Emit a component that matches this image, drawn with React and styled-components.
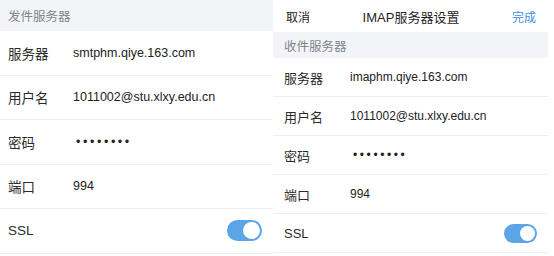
import React from "react";
import styled, { createGlobalStyle } from "styled-components";

const GlobalStyle = createGlobalStyle`
  html, body {
    margin: 0;
    padding: 0;
    background: #ffffff;
  }
  body {
    font-family: "Liberation Sans", "Noto Sans CJK SC", sans-serif;
    -webkit-font-smoothing: antialiased;
  }
`;

const outgoing = {
  header: "发件服务器",
  rows: [
    { label: "服务器", value: "smtphm.qiye.163.com" },
    { label: "用户名", value: "1011002@stu.xlxy.edu.cn" },
    { label: "密码", value: "••••••••", secret: true },
    { label: "端口", value: "994" },
    { label: "SSL", toggle: true },
  ],
};

const incoming = {
  header: "收件服务器",
  rows: [
    { label: "服务器", value: "imaphm.qiye.163.com" },
    { label: "用户名", value: "1011002@stu.xlxy.edu.cn" },
    { label: "密码", value: "••••••••", secret: true },
    { label: "端口", value: "994" },
    { label: "SSL", toggle: true },
  ],
};

function Switch({ size }) {
  return (
    <Track $w={size.w} $h={size.h}>
      <Knob $d={size.h - 4} />
    </Track>
  );
}

function SettingsList({ data, size }) {
  return (
    <>
      <SectionHeader $h={size.header} $pad={size.pad}>
        {data.header}
      </SectionHeader>
      {data.rows.map((row, index) => (
        <Row key={index} $h={size.row} $pad={size.pad} $right={size.right}>
          <Label $size={size.label} $w={size.labelW}>
            {row.label}
          </Label>
          {row.toggle ? (
            <Switch size={size.toggle} />
          ) : (
            <Value $size={size.value} $secret={row.secret}>
              {row.value}
            </Value>
          )}
        </Row>
      ))}
    </>
  );
}

function App() {
  return (
    <>
      <GlobalStyle />
      <Page>
        <Panel $w={273}>
          <SettingsList
            data={outgoing}
            size={{
              header: 31,
              row: 44.5,
              pad: 8,
              right: 11,
              label: 13.5,
              labelW: 65,
              value: 12.5,
              toggle: { w: 35, h: 21 },
            }}
          />
        </Panel>
        <Panel $w={275}>
          <NavBar>
            <NavButton>取消</NavButton>
            <NavTitle>IMAP服务器设置</NavTitle>
            <NavButton $primary>完成</NavButton>
          </NavBar>
          <SettingsList
            data={incoming}
            size={{
              header: 26,
              row: 39,
              pad: 11,
              right: 11,
              label: 13,
              labelW: 66,
              value: 12,
              toggle: { w: 33, h: 19 },
            }}
          />
        </Panel>
      </Page>
    </>
  );
}

const Page = styled.div`
  display: flex;
  width: 554px;
  height: 256px;
  overflow: hidden;
  background: #ffffff;
`;

const Panel = styled.div`
  display: flex;
  flex-direction: column;
  width: ${(p) => p.$w}px;
  flex-shrink: 0;
  background: #ffffff;
`;

const NavBar = styled.div`
  display: flex;
  align-items: center;
  justify-content: space-between;
  height: 32px;
  padding: 0 12px 0 13px;
  box-sizing: border-box;
`;

const NavButton = styled.span`
  font-size: 12px;
  color: ${(p) => (p.$primary ? "#3b8fe2" : "#222222")};
  width: 40px;
  text-align: ${(p) => (p.$primary ? "right" : "left")};
`;

const NavTitle = styled.span`
  font-size: 13px;
  color: #1f1f1f;
`;

const SectionHeader = styled.div`
  display: flex;
  align-items: center;
  height: ${(p) => p.$h}px;
  padding-left: ${(p) => p.$pad}px;
  background: #f3f4f8;
  color: #7f848c;
  font-size: 12.5px;
  box-sizing: border-box;
`;

const Row = styled.div`
  display: flex;
  align-items: center;
  height: ${(p) => p.$h}px;
  padding: 0 ${(p) => p.$right}px 0 ${(p) => p.$pad}px;
  border-bottom: 1px solid #efefef;
  box-sizing: border-box;
`;

const Label = styled.span`
  width: ${(p) => p.$w}px;
  flex-shrink: 0;
  font-size: ${(p) => p.$size}px;
  color: #2b2b2b;
`;

const Value = styled.span`
  flex: 1;
  font-size: ${(p) => p.$size}px;
  color: #222222;
  padding-left: ${(p) => (p.$secret ? 3 : 0)}px;
  letter-spacing: ${(p) => (p.$secret ? "2.6px" : "0")};
`;

const Track = styled.span`
  margin-left: auto;
  display: flex;
  align-items: center;
  justify-content: flex-end;
  width: ${(p) => p.$w}px;
  height: ${(p) => p.$h}px;
  padding: 2px;
  border-radius: ${(p) => p.$h / 2}px;
  background: #5ca5e8;
  box-sizing: border-box;
`;

const Knob = styled.span`
  width: ${(p) => p.$d}px;
  height: ${(p) => p.$d}px;
  border-radius: 50%;
  background: #ffffff;
`;

export default App;
